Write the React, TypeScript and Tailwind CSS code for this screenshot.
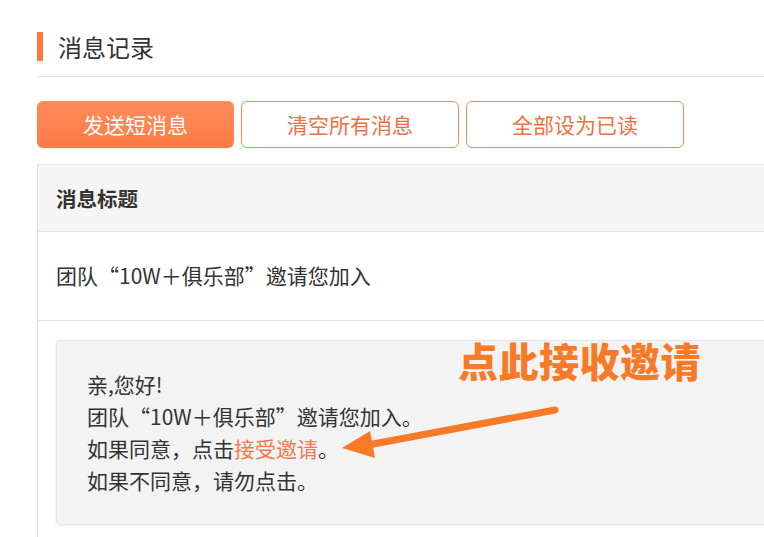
const font = { fontFamily: '"Microsoft YaHei", "Noto Sans CJK SC", "Noto Sans", sans-serif' }

function ActionButton({ label, primary, width }: { label: string; primary?: boolean; width: string }) {
    return (
        <button
            className={
                primary
                    ? `${width} h-[47px] rounded-[6px] bg-gradient-to-b from-[#ff8c5c] to-[#ff7a45] text-white text-[21px] shadow-[0_1px_2px_rgba(0,0,0,0.08)]`
                    : `${width} h-[47px] rounded-[6px] border border-[#ee8a5c] bg-white text-[#f0703f] text-[21px]`
            }
        >
            {label}
        </button>
    )
}

export default function App() {
    return (
        <div className="relative w-[764px] h-[537px] overflow-hidden bg-white text-[#333]" style={font}>
            <div className="w-[1000px] pl-[37px]">
                {/* page title */}
                <div className="flex items-center gap-[15px] pt-[32px] pb-[15px] border-b border-[#e3e3e3]">
                    <div className="w-[6px] h-[29px] bg-[#ff7a3d]" />
                    <h2 className="text-[24px] leading-[29px] text-[#333]">消息记录</h2>
                </div>

                {/* actions */}
                <div className="flex gap-[7px] mt-[24px]">
                    <ActionButton label="发送短消息" primary width="w-[197px]" />
                    <ActionButton label="清空所有消息" width="w-[218px]" />
                    <ActionButton label="全部设为已读" width="w-[218px]" />
                </div>

                {/* table */}
                <div className="mt-[16px] border-l border-t border-[#e3e3e3]">
                    <div className="h-[67px] flex items-center pl-[18px] bg-[#f5f5f5] border-b border-[#e3e3e3]">
                        <span className="text-[20.5px] font-bold text-[#333]">消息标题</span>
                    </div>
                    <div className="h-[89px] flex items-center pl-[18px] border-b border-[#e3e3e3]">
                        <span className="text-[21px] text-[#333]">团队“10W＋俱乐部”邀请您加入</span>
                    </div>
                    <div className="pt-[19px] pl-[18px] pb-[12px]">
                        <div className="rounded-[4px] border border-[#e6e6e6] bg-[#f3f3f3] shadow-[0_1px_3px_rgba(0,0,0,0.08)] pl-[30px] pt-[27px] pb-[28px] text-[21px] leading-[32px] text-[#333]">
                            <p>亲,您好!</p>
                            <p>团队“10W＋俱乐部”邀请您加入。</p>
                            <p>
                                如果同意，点击<a className="text-[#f47a4e] cursor-pointer">接受邀请</a>。
                            </p>
                            <p>如果不同意，请勿点击。</p>
                        </div>
                    </div>
                </div>
            </div>

            {/* annotation overlay */}
            <div className="absolute left-[458px] top-[336px] text-[40px] leading-[48px] font-black tracking-[0.5px] text-[#f87a26]">
                点此接收邀请
            </div>
            <svg className="absolute left-0 top-0" width="764" height="537" viewBox="0 0 764 537">
                <line x1="555" y1="410" x2="368" y2="445" stroke="#f87a26" strokeWidth="7" strokeLinecap="round" />
                <polygon points="342,448 370,431 375,458" fill="#f87a26" />
            </svg>
        </div>
    )
}
